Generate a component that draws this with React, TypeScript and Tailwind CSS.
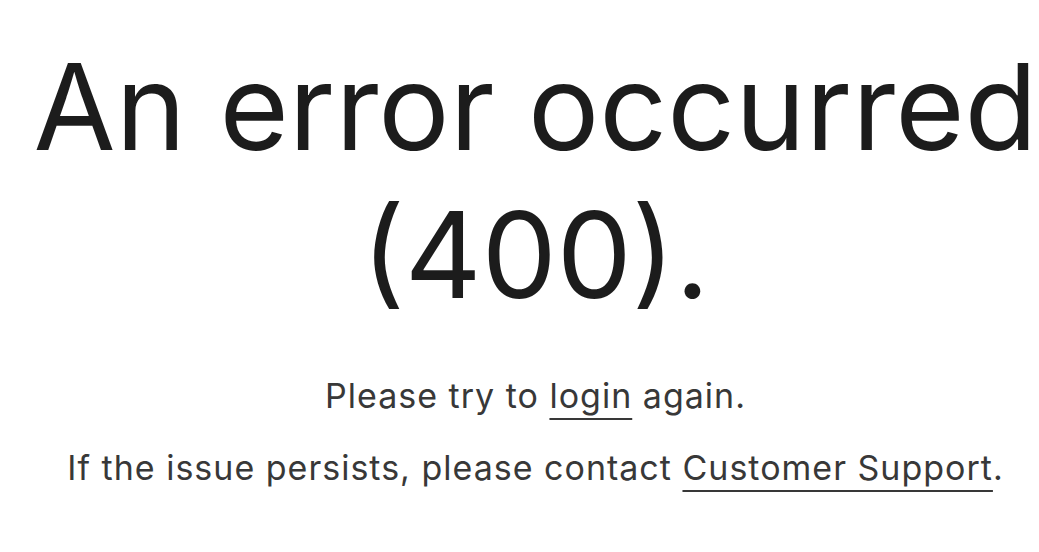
import React from 'react';

const App: React.FC = () => {
  return (
    <div
      className="w-[1039px] h-[552px] bg-white overflow-hidden flex flex-col items-center pl-[32px]"
      style={{ fontFamily: 'Inter, "Liberation Sans", sans-serif' }}
    >
      {/* Titulo */}
      <h1 className="mt-[33px] text-center text-[#1c1c1c] text-[119px] leading-[148px] font-normal whitespace-nowrap">
        An error occurred
        <br />
        (400).
      </h1>

      {/* Mensagens */}
      <p className="mt-[47px] text-[#383838] text-[34px] leading-[40px] tracking-[1px] text-center whitespace-nowrap">
        Please try to{' '}
        <a href="#" className="underline decoration-2 underline-offset-[10px]">
          login
        </a>{' '}
        again.
      </p>
      <p className="mt-[32px] text-[#383838] text-[34px] leading-[40px] tracking-[1px] text-center whitespace-nowrap">
        If the issue persists, please contact{' '}
        <a href="#" className="underline decoration-2 underline-offset-[10px]">
          Customer Support
        </a>
        .
      </p>
    </div>
  );
};

export default App;
